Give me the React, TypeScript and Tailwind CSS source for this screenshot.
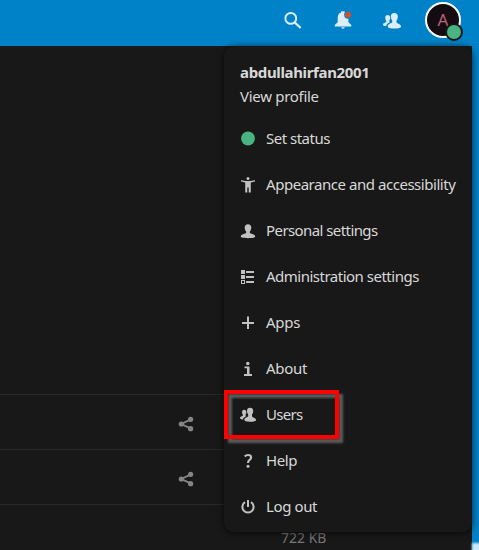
import type { ReactNode } from "react";

const PERSON = "M8 1.200C5.900 1.200 4.700 2.500 4.700 4.500c0 1.700.6 3 1.500 4v1.200C5.600 11 .8 10.900.8 13.300c0 1.300 2.200 1.900 7.200 1.900s7.200-.6 7.200-1.900c0-2.400-4.800-2.300-5.400-3.600V8.500c.9-1 1.500-2.300 1.500-4 0-2-1.200-3.300-3.300-3.300z";

function Svg({ children, className = "size-4" }: { children: ReactNode; className?: string }) {
  return (
    <svg viewBox="0 0 16 16" fill="currentColor" className={`${className} shrink-0`}>
      {children}
    </svg>
  );
}

function Group({ className }: { className?: string }) {
  return (
    <Svg className={className}>
      <path d="M10 .8C8 .8 7 2 7 4c0 1.500.5 2.700 1.200 3.600v1.600c-.6 1.100-3.900 1.200-3.900 3.600 0 1.300 1.900 1.900 5.700 1.900 3.900 0 6-.6 6-1.800 0-2.200-3.300-2-4-3.700V7.600C12.700 6.700 13.200 5.500 13.200 4 13.200 2 12 .8 10 .8z" />
      <path d="M4.200 2.700c-1.400 0-2.200.9-2.200 2.400 0 1.100.3 2 .9 2.600v.9C2.400 9.600 0 9.600 0 11.100c0 .9.900 1.300 2.900 1.400.3-1.900 1.700-2.700 3.600-3.600l-1-.5v-.7c.6-.6.9-1.500.9-2.600 0-1.500-.8-2.400-2.200-2.400z" />
    </Svg>
  );
}

const ITEMS: { label: string; tracking: string; icon: ReactNode }[] = [
  { label: "Set status", tracking: "tracking-[-0.5px]", icon: <Svg><circle cx="8" cy="7.500" r="6.900" fill="#49b382" /></Svg> },
  {
    label: "Appearance and accessibility",
    tracking: "tracking-[-0.46px]",
    icon: (
      <Svg>
        <circle cx="8" cy="1.600" r="1.500" />
        <path d="M1 3.200 6 4h4l5-.8v1.400l-4.200 1V15.500H8.700V10.500H7.300v5H5.200V5.600L1 4.600z" />
      </Svg>
    ),
  },
  { label: "Personal settings", tracking: "tracking-[-0.58px]", icon: <Svg><path d={PERSON} /></Svg> },
  {
    label: "Administration settings",
    tracking: "tracking-[-0.5px]",
    icon: (
      <Svg>
        <path d="M1 1h4v4H1zM6 2h8v2H6zM1 6h4v4H1zM6 7h8v2H6zM6 12h8v2H6zM1 11h4v4H1zm1 1v2h2v-2z" fillRule="evenodd" />
      </Svg>
    ),
  },
  { label: "Apps", tracking: "tracking-[-0.3px]", icon: <Svg><path d="M7 1.500h2V7h5v2H9v5H7V9H2V7h5z" /></Svg> },
  {
    label: "About",
    tracking: "tracking-[-0.3px]",
    icon: (
      <Svg>
        <circle cx="7.800" cy="2.500" r="1.700" />
        <path d="M4.500 5.500h5V13H12v2H4v-2h3V7.300H4.500z" />
      </Svg>
    ),
  },
  { label: "Users", tracking: "tracking-[-0.7px]", icon: <Group /> },
  {
    label: "Help",
    tracking: "tracking-[-0.4px]",
    icon: (
      <Svg>
        <path d="M4.700 3.400C5.600 2.500 6.700 2 8 2c2 0 3.100.9 3.100 2.400C11.100 7 8 6.700 8 10" fill="none" stroke="currentColor" strokeWidth="2.100" />
        <circle cx="8" cy="13.200" r="1.500" />
      </Svg>
    ),
  },
  {
    label: "Log out",
    tracking: "tracking-[-0.4px]",
    icon: (
      <Svg>
        <path d="M5 3.200a5.600 5.600 0 1 0 6 0M8 1v7" fill="none" stroke="currentColor" strokeWidth="2" />
      </Svg>
    ),
  },
];

function Share() {
  return (
    <Svg className="size-4 text-[#858585]">
      <path d="M13 3.300 3.300 8l9.700 4.700" fill="none" stroke="currentColor" strokeWidth="1.900" />
      <circle cx="12.600" cy="3.300" r="2.600" />
      <circle cx="3.300" cy="8" r="2.600" />
      <circle cx="12.600" cy="12.700" r="2.600" />
    </Svg>
  );
}

function Header() {
  return (
    <header className="flex h-[46px] items-center bg-[#0082c9] pl-[284px] text-[#dceefa]">
      <Svg className="mb-[6px] size-[17px]">
        <circle cx="6.400" cy="6" r="5.100" fill="none" stroke="currentColor" strokeWidth="1.800" />
        <path d="m9.900 9.600 5.800 5.500" stroke="currentColor" strokeWidth="2.100" />
      </Svg>
      <Svg className="mb-[6px] ml-[33px] size-[18px]">
        <path d="M7.200.2c-.7 0-1 .5-1 1.200C4.200 2.100 3.300 3.700 3.300 6v4L.7 12.500v1.300h14.700v-1.300L12.800 10V6C12.800 3.700 11.900 2.100 9.800 1.400 9.800.7 9.400.2 8.700.2zM6.500 14.500h3c0 .9-.5 1.300-1.500 1.300s-1.500-.4-1.500-1.300z" />
        <circle cx="12.500" cy="3.400" r="3.500" fill="#0082c9" />
        <circle cx="12.500" cy="3.400" r="2.600" fill="#e34a20" />
      </Svg>
      <Group className="mb-[5px] ml-[31px] size-[18px]" />
      <div className="relative mb-[6px] ml-[24px] flex size-9 items-center justify-center rounded-full border-2 border-white bg-[#150c11] font-['Noto_Sans'] text-[17px] leading-none text-[#b96279]">
        <span className="-mt-px">A</span>
        <span className="absolute top-[19px] left-[18px] size-[18px] rounded-full border-2 border-[#171717] bg-[#49b382]" />
      </div>
    </header>
  );
}

export default function App() {
  return (
    <div className="relative flex h-[550px] w-[479px] flex-col overflow-hidden bg-[#0082c9] font-['Noto_Sans','Open_Sans',sans-serif]">
      <Header />
      <main className="flex w-[472px] flex-1 flex-col bg-[#181818] pt-[348px]">
        <div className="flex h-[55px] items-center border-t border-[#292929] pt-[4px] pl-[178px]"><Share /></div>
        <div className="flex h-[55px] items-center border-t border-[#292929] pt-[4px] pl-[178px]"><Share /></div>
        <div className="h-[46px] border-t border-[#292929] pt-[23px] pl-[281px] text-[14px] leading-[20px] text-[#777]">722 KB</div>
      </main>
      <div className="absolute top-[543px] left-[472px] h-5 w-5 bg-[#cce9f7] blur-[1px]" />
      <nav className="absolute top-[46px] left-[224px] h-[486px] w-[248px] rounded-[10px] bg-[#181818] pt-[14px] text-[#d8d8d8] shadow-[0_1px_7px_rgba(0,0,0,0.75)]">
        <div className="flex h-[56px] flex-col pl-4">
          <strong className="text-[15px] leading-[24px] tracking-[-0.35px]">abdullahirfan2001</strong>
          <span className="text-[15px] leading-[24px] tracking-[-0.3px]">View profile</span>
        </div>
        {ITEMS.map(({ label, tracking, icon }) => (
          <div key={label} className="flex h-[46px] items-center gap-[10px] pl-4">
            <span className="text-[#c1c1c1]">{icon}</span>
            <span className={`whitespace-nowrap pb-[2px] text-[15px] leading-[22px] ${tracking}`}>{label}</span>
          </div>
        ))}
      </nav>
      <div className="absolute top-[390px] left-[224px] h-[49px] w-[115px] border-4 border-[#ff0000] drop-shadow-[4px_4px_1px_#5b5b5b]" />
    </div>
  );
}
